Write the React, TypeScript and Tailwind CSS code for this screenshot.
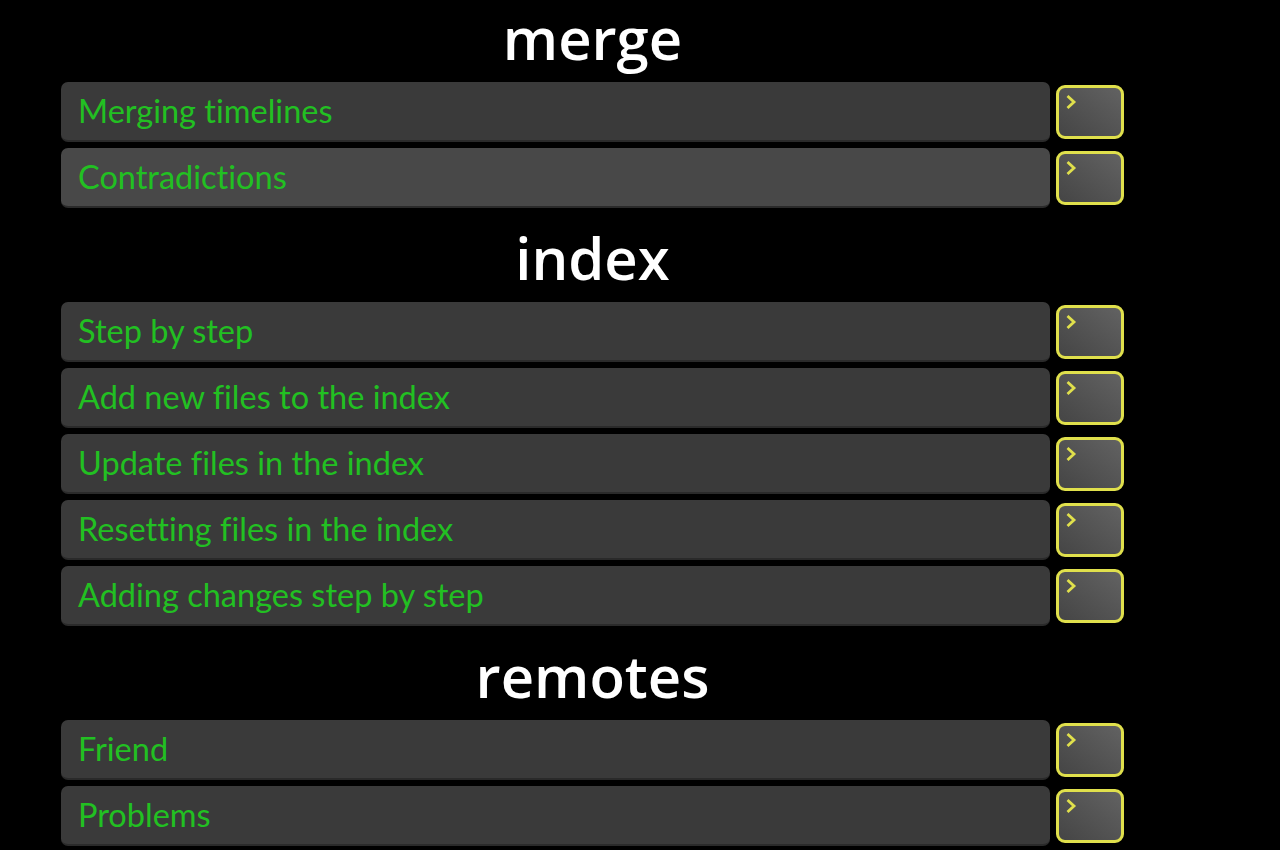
import React from 'react';

type Section = { title: string; items: string[]; first?: boolean };

const sections: Section[] = [
  { title: 'merge', items: ['Merging timelines', 'Contradictions'], first: true },
  {
    title: 'index',
    items: [
      'Step by step',
      'Add new files to the index',
      'Update files in the index',
      'Resetting files in the index',
      'Adding changes step by step',
    ],
  },
  { title: 'remotes', items: ['Friend', 'Problems'] },
];

function GoButton() {
  return (
    <button className="relative w-[68px] h-[54px] shrink-0 rounded-[9px] border-[3px] border-[#e0e04c] bg-gradient-to-tr from-[#454545] to-[#626262]">
      <svg
        className="absolute left-[6px] top-[6px]"
        width="13"
        height="16"
        viewBox="0 0 13 16"
        fill="none"
      >
        <path d="M2.5 2 L9 8 L2.5 14" stroke="#e0e04c" strokeWidth="2.8" strokeLinejoin="miter" />
      </svg>
    </button>
  );
}

function Row({ label, hover }: { label: string; hover?: boolean }) {
  return (
    <div className="flex items-center gap-[6px]">
      <div
        className={`flex-1 h-[60px] flex items-center pl-[17px] rounded-[7px] border-b-2 border-[#2a2a2a] ${
          hover ? 'bg-[#484848]' : 'bg-[#3a3a3a]'
        }`}
      >
        <span className="text-[#22c022] text-[32.5px] leading-none font-['Lato',sans-serif] [font-variant-ligatures:none]">
          {label}
        </span>
      </div>
      <GoButton />
    </div>
  );
}

export default function App() {
  return (
    <div className="min-h-[850px] bg-black pl-[61px] pr-[156px] overflow-hidden">
      {sections.map((s) => (
        <div key={s.title}>
          <h2
            className={`text-white text-center font-semibold text-[58px] leading-none font-['Open_Sans',sans-serif] flex items-center justify-center ${
              s.first ? 'h-[82px] pt-[2px] pb-[8px]' : 'h-[94px] pt-[6px]'
            }`}
          >
            {s.title}
          </h2>
          <div className="flex flex-col gap-[6px]">
            {s.items.map((it) => (
              <Row key={it} label={it} hover={it === 'Contradictions'} />
            ))}
          </div>
        </div>
      ))}
    </div>
  );
}
